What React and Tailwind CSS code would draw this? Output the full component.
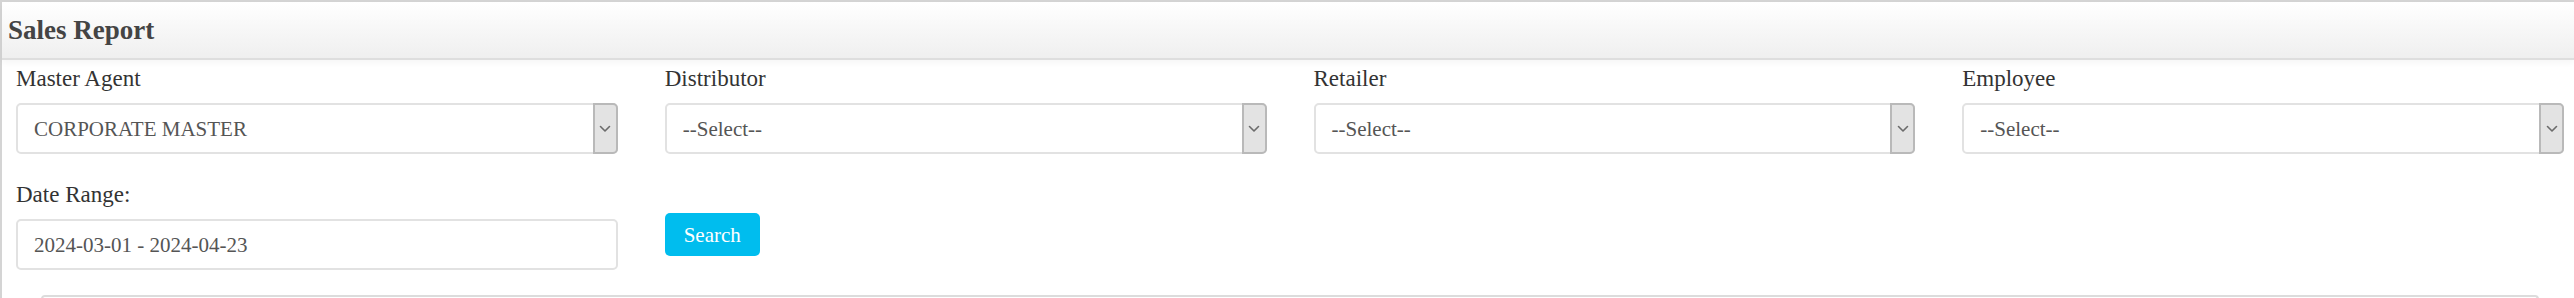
import React from "react";

function Chevron() {
  return (
    <svg width="12" height="8" viewBox="0 0 12 8" fill="none">
      <path d="M1.5 1.5 L6 6 L10.5 1.5" stroke="#6b6b6b" strokeWidth="1.6" strokeLinecap="round" strokeLinejoin="round" />
    </svg>
  );
}

function SelectBox({ value }) {
  return (
    <div className="flex h-[51px] items-stretch rounded-[5px] border-2 border-[#e2e2e2] bg-white">
      <div className="flex flex-1 items-center pl-[16px] text-[21px] leading-[24px] text-[#555]">{value}</div>
      <div className="-my-[2px] -mr-[2px] flex w-[25px] items-center justify-center rounded-r-[5px] border-2 border-[#b9b9b9] bg-[#e3e3e3]">
        <Chevron />
      </div>
    </div>
  );
}

function Field({ label, value }) {
  return (
    <div className="flex flex-col">
      <div className="mb-[11px] h-[26px] text-[23px] leading-[26px] text-[#333]">{label}</div>
      <SelectBox value={value} />
    </div>
  );
}

export default function App() {
  return (
    <div className="h-[298px] w-[2574px] overflow-hidden bg-white" style={{ fontFamily: '"Liberation Serif", "Times New Roman", serif' }}>
      <div className="h-[298px] border-l-2 border-t-2 border-[#d4d4d4]">
        <div className="flex h-[58px] items-center border-b-2 border-[#dedede] bg-gradient-to-b from-[#ffffff] to-[#efefef] pl-[6px] shadow-[0_3px_6px_rgba(0,0,0,0.04)]">
          <h1 className="text-[27px] font-bold leading-[30px] text-[#444]">Sales Report</h1>
        </div>
        <div className="pl-[14px] pr-[10px] pt-[6px]">
          <div className="grid grid-cols-4 gap-x-[47px]">
            <Field label="Master Agent" value="CORPORATE MASTER" />
            <Field label="Distributor" value="--Select--" />
            <Field label="Retailer" value="--Select--" />
            <Field label="Employee" value="--Select--" />
          </div>
          <div className="mt-[28px] grid grid-cols-4 gap-x-[47px]">
            <div className="flex flex-col">
              <div className="mb-[11px] h-[26px] text-[23px] leading-[26px] text-[#333]">Date Range:</div>
              <div className="flex h-[51px] items-center rounded-[5px] border-2 border-[#e2e2e2] bg-white pl-[16px] text-[21px] leading-[24px] text-[#555]">
                2024-03-01 - 2024-04-23
              </div>
            </div>
            <div className="pt-[31px]">
              <button className="flex h-[43px] w-[95px] items-center justify-center rounded-[5px] bg-[#00bdee] text-[21px] leading-[24px] text-white">
                Search
              </button>
            </div>
          </div>
          <div className="ml-[25px] mr-[25px] mt-[25px] h-[6px] rounded-t-[4px] border-x-2 border-t-2 border-[#dcdcdc]"></div>
        </div>
      </div>
    </div>
  );
}
